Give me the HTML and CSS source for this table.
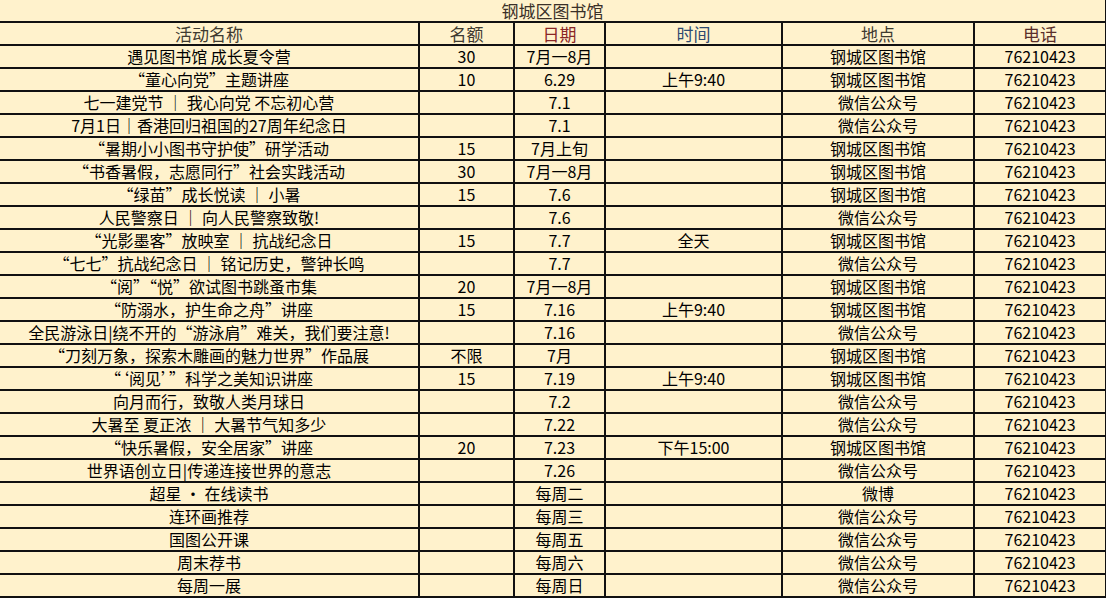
FILE: index.html
```html
<!DOCTYPE html>
<html lang="zh-CN">
<head>
<meta charset="utf-8">
<title>钢城区图书馆</title>
<link rel="stylesheet" href="styles.css">
</head>
<body>
<table class="sheet">
  <colgroup>
    <col class="c-name"><col class="c-quota"><col class="c-date"><col class="c-time"><col class="c-place"><col class="c-phone">
  </colgroup>
  <thead>
    <tr class="title-row"><th colspan="6" class="title">钢城区图书馆</th></tr>
    <tr class="head-row">
      <th class="h-name">活动名称</th>
      <th class="h-quota">名额</th>
      <th class="h-date">日期</th>
      <th class="h-time">时间</th>
      <th class="h-place">地点</th>
      <th class="h-phone">电话</th>
    </tr>
  </thead>
  <tbody>
    <tr><td>遇见图书馆 成长夏令营</td><td>30</td><td>7月一8月</td><td></td><td>钢城区图书馆</td><td>76210423</td></tr>
    <tr><td>“童心向党”主题讲座</td><td>10</td><td>6.29</td><td>上午9:40</td><td>钢城区图书馆</td><td>76210423</td></tr>
    <tr><td>七一建党节 ｜ 我心向党 不忘初心营</td><td></td><td>7.1</td><td></td><td>微信公众号</td><td>76210423</td></tr>
    <tr><td>7月1日｜香港回归祖国的27周年纪念日</td><td></td><td>7.1</td><td></td><td>微信公众号</td><td>76210423</td></tr>
    <tr><td>“暑期小小图书守护使”研学活动</td><td>15</td><td>7月上旬</td><td></td><td>钢城区图书馆</td><td>76210423</td></tr>
    <tr><td>“书香暑假，志愿同行”社会实践活动</td><td>30</td><td>7月一8月</td><td></td><td>钢城区图书馆</td><td>76210423</td></tr>
    <tr><td>“绿苗”成长悦读 ｜ 小暑</td><td>15</td><td>7.6</td><td></td><td>钢城区图书馆</td><td>76210423</td></tr>
    <tr><td>人民警察日 ｜ 向人民警察致敬!</td><td></td><td>7.6</td><td></td><td>微信公众号</td><td>76210423</td></tr>
    <tr><td>“光影墨客”放映室 ｜ 抗战纪念日</td><td>15</td><td>7.7</td><td>全天</td><td>钢城区图书馆</td><td>76210423</td></tr>
    <tr><td>“七七”抗战纪念日 ｜ 铭记历史，警钟长鸣</td><td></td><td>7.7</td><td></td><td>微信公众号</td><td>76210423</td></tr>
    <tr><td>“阅”“悦”欲试图书跳蚤市集</td><td>20</td><td>7月一8月</td><td></td><td>钢城区图书馆</td><td>76210423</td></tr>
    <tr><td>“防溺水，护生命之舟”讲座</td><td>15</td><td>7.16</td><td>上午9:40</td><td>钢城区图书馆</td><td>76210423</td></tr>
    <tr><td>全民游泳日|绕不开的“游泳肩”难关，我们要注意!</td><td></td><td>7.16</td><td></td><td>微信公众号</td><td>76210423</td></tr>
    <tr><td>“刀刻万象，探索木雕画的魅力世界”作品展</td><td>不限</td><td>7月</td><td></td><td>钢城区图书馆</td><td>76210423</td></tr>
    <tr><td>“‘阅见’”科学之美知识讲座</td><td>15</td><td>7.19</td><td>上午9:40</td><td>钢城区图书馆</td><td>76210423</td></tr>
    <tr><td>向月而行，致敬人类月球日</td><td></td><td>7.2</td><td></td><td>微信公众号</td><td>76210423</td></tr>
    <tr><td>大暑至 夏正浓 ｜ 大暑节气知多少</td><td></td><td>7.22</td><td></td><td>微信公众号</td><td>76210423</td></tr>
    <tr><td>“快乐暑假，安全居家”讲座</td><td>20</td><td>7.23</td><td>下午15:00</td><td>钢城区图书馆</td><td>76210423</td></tr>
    <tr><td>世界语创立日|传递连接世界的意志</td><td></td><td>7.26</td><td></td><td>微信公众号</td><td>76210423</td></tr>
    <tr><td>超星 · 在线读书</td><td></td><td>每周二</td><td></td><td>微博</td><td>76210423</td></tr>
    <tr><td>连环画推荐</td><td></td><td>每周三</td><td></td><td>微信公众号</td><td>76210423</td></tr>
    <tr><td>国图公开课</td><td></td><td>每周五</td><td></td><td>微信公众号</td><td>76210423</td></tr>
    <tr><td>周末荐书</td><td></td><td>每周六</td><td></td><td>微信公众号</td><td>76210423</td></tr>
    <tr><td>每周一展</td><td></td><td>每周日</td><td></td><td>微信公众号</td><td>76210423</td></tr>
  </tbody>
</table>
</body>
</html>
```

FILE: styles.css
```css
html, body {
  margin: 0;
  padding: 0;
  background: #fff2cc;
}

body {
  width: 1106px;
  height: 598px;
  overflow: hidden;
  font-family: "Noto Sans CJK SC", "Noto Sans", sans-serif;
}

.sheet {
  width: 1106px;
  table-layout: fixed;
  border-collapse: collapse;
  background: #fff2cc;
}

.c-name { width: 419px; }
.c-quota { width: 95px; }
.c-date { width: 91px; }
.c-time { width: 177px; }
.c-place { width: 192px; }
.c-phone { width: 132px; }

.sheet th,
.sheet td {
  padding: 0;
  text-align: center;
  white-space: nowrap;
  font-weight: 400;
}

.sheet td {
  height: 21px;
  font-size: 16px;
  line-height: 21px;
  color: #000;
  border: 2px solid #111;
  overflow: hidden;
}

.sheet tbody td:first-child,
.head-row th:first-child {
  border-left: none;
}

.title-row th {
  height: 21px;
  font-size: 17px;
  line-height: 21px;
  color: #3a3028;
  border-bottom: 2px solid #111;
  border-right: 2px solid #111;
}

.head-row th {
  height: 21px;
  font-size: 17px;
  line-height: 21px;
  border: 2px solid #111;
  color: #3e3a30;
}

.h-name { color: #4a4034; }
.h-quota { color: #3d3328; }
.sheet .h-date { color: #8a2626; }
.sheet .h-time { color: #2e4a70; }
.h-place { color: #3d3328; }
.sheet .h-phone { color: #5a2e2a; }
```
